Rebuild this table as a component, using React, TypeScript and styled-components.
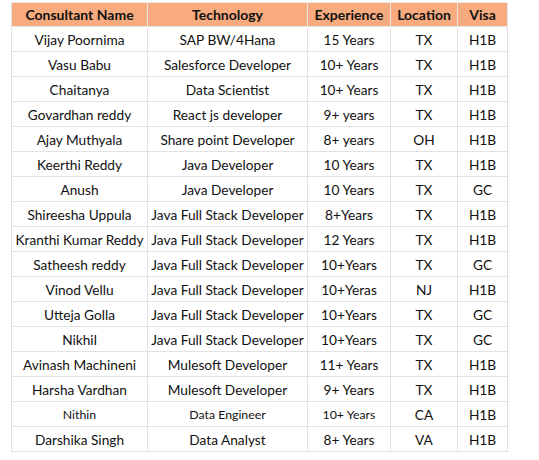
import React from "react";
import styled, { createGlobalStyle } from "styled-components";

interface IConsultant {
  name: string;
  tech: string;
  exp: string;
  loc: string;
  visa: string;
  small?: boolean;
}

const consultants: IConsultant[] = [
  { name: "Vijay Poornima", tech: "SAP BW/4Hana", exp: "15 Years", loc: "TX", visa: "H1B" },
  { name: "Vasu Babu", tech: "Salesforce Developer", exp: "10+ Years", loc: "TX", visa: "H1B" },
  { name: "Chaitanya", tech: "Data Scientist", exp: "10+ Years", loc: "TX", visa: "H1B" },
  { name: "Govardhan reddy", tech: "React js developer", exp: "9+ years", loc: "TX", visa: "H1B" },
  { name: "Ajay Muthyala", tech: "Share point Developer", exp: "8+ years", loc: "OH", visa: "H1B" },
  { name: "Keerthi Reddy", tech: "Java Developer", exp: "10 Years", loc: "TX", visa: "H1B" },
  { name: "Anush", tech: "Java Developer", exp: "10 Years", loc: "TX", visa: "GC" },
  { name: "Shireesha Uppula", tech: "Java Full Stack Developer", exp: "8+Years", loc: "TX", visa: "H1B" },
  { name: "Kranthi Kumar Reddy", tech: "Java Full Stack Developer", exp: "12 Years", loc: "TX", visa: "H1B" },
  { name: "Satheesh reddy", tech: "Java Full Stack Developer", exp: "10+Years", loc: "TX", visa: "GC" },
  { name: "Vinod Vellu", tech: "Java Full Stack Developer", exp: "10+Yeras", loc: "NJ", visa: "H1B" },
  { name: "Utteja Golla", tech: "Java Full Stack Developer", exp: "10+Years", loc: "TX", visa: "GC" },
  { name: "Nikhil", tech: "Java Full Stack Developer", exp: "10+Years", loc: "TX", visa: "GC" },
  { name: "Avinash Machineni", tech: "Mulesoft Developer", exp: "11+ Years", loc: "TX", visa: "H1B" },
  { name: "Harsha Vardhan", tech: "Mulesoft Developer", exp: "9+ Years", loc: "TX", visa: "H1B" },
  { name: "Nithin", tech: "Data Engineer", exp: "10+ Years", loc: "CA", visa: "H1B", small: true },
  { name: "Darshika Singh", tech: "Data Analyst", exp: "8+ Years", loc: "VA", visa: "H1B" },
];

const columns = [
  { label: "Consultant Name", width: 136 },
  { label: "Technology", width: 160 },
  { label: "Experience", width: 83 },
  { label: "Location", width: 67 },
  { label: "Visa", width: 50 },
];

const GlobalStyle = createGlobalStyle`
  body {
    margin: 0;
    background: #ffffff;
    font-family: "Lato", "Open Sans", sans-serif;
    color: #111111;
  }
`;

const Page = styled.div`
  padding: 2px 0 0 11px;
`;

const Table = styled.table`
  border-collapse: collapse;
  table-layout: fixed;
  width: 497px;
  font-size: 13.7px;
`;

const HeadCell = styled.th`
  height: 23px;
  padding: 0;
  background: #f8ab7e;
  border: 1px solid #e6e6e6;
  font-weight: 700;
  font-size: 14px;
  text-align: center;
  white-space: nowrap;
`;

const Cell = styled.td<{ $small?: boolean }>`
  height: 24px;
  padding: 0;
  border: 1px solid #e2e2e2;
  text-align: center;
  white-space: nowrap;
  font-size: ${(p) => (p.$small ? "12.3px" : "13.7px")};
`;

const App: React.FC = () => (
  <>
    <GlobalStyle />
    <Page>
      <Table>
        <colgroup>
          {columns.map((c) => (
            <col key={c.label} style={{ width: c.width }} />
          ))}
        </colgroup>
        <thead>
          <tr>
            {columns.map((c) => (
              <HeadCell key={c.label}>{c.label}</HeadCell>
            ))}
          </tr>
        </thead>
        <tbody>
          {consultants.map((r) => (
            <tr key={r.name}>
              <Cell $small={r.small}>{r.name}</Cell>
              <Cell $small={r.small}>{r.tech}</Cell>
              <Cell $small={r.small}>{r.exp}</Cell>
              <Cell>{r.loc}</Cell>
              <Cell>{r.visa}</Cell>
            </tr>
          ))}
        </tbody>
      </Table>
    </Page>
  </>
);

export default App;
